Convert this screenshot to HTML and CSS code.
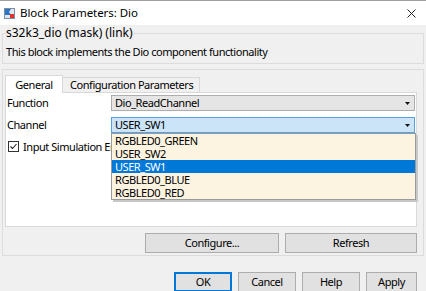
FILE: index.html
```html
<!DOCTYPE html>
<html>
<head>
<meta charset="utf-8">
<link rel="stylesheet" href="styles.css">
</head>
<body>
<div class="window">
  <div class="titlebar">
    <svg class="app-icon" width="11" height="11" viewBox="0 0 11 11">
      <rect x="0.5" y="0.5" width="10" height="10" fill="#dfe8f2" stroke="#7d8fa6"/>
      <path d="M1 1 H7 L5 4 L7 7 H1 Z" fill="#2f74c0"/>
      <rect x="6" y="6" width="4" height="4" fill="#d9332a"/>
    </svg>
    <span class="title">Block Parameters: Dio</span>
    <svg class="close" width="9" height="9" viewBox="0 0 9 9">
      <path d="M0.5 0.5 L8.5 8.5 M8.5 0.5 L0.5 8.5" stroke="#222" stroke-width="1"/>
    </svg>
  </div>

  <fieldset class="desc">
    <legend>s32k3_dio (mask) (link)</legend>
    <p class="desc-text">This block implements the Dio component functionality</p>
  </fieldset>

  <div class="params">
    <div class="tabs">
      <div class="tab active">General</div>
      <div class="tab">Configuration Parameters</div>
    </div>
    <div class="tabpanel">
      <div class="row">
        <span class="label">Function</span>
        <div class="combo">
          <span class="combo-text">Dio_ReadChannel</span>
          <svg class="arrow" width="5" height="3" viewBox="0 0 5 3"><path d="M0 0 H5 L2.5 3 Z" fill="#111"/></svg>
        </div>
      </div>
      <div class="row">
        <span class="label">Channel</span>
        <div class="combo focus">
          <span class="combo-text">USER_SW1</span>
          <svg class="arrow" width="5" height="3" viewBox="0 0 5 3"><path d="M0 0 H5 L2.5 3 Z" fill="#111"/></svg>
          <ul class="listbox">
            <li>RGBLED0_GREEN</li>
            <li>USER_SW2</li>
            <li class="selected">USER_SW1</li>
            <li>RGBLED0_BLUE</li>
            <li>RGBLED0_RED</li>
          </ul>
        </div>
      </div>
      <div class="row check-row">
        <span class="checkbox">
          <svg width="11" height="11" viewBox="0 0 11 11">
            <rect x="0.5" y="0.5" width="10" height="10" fill="#fff" stroke="#333"/>
            <path d="M2.5 5.5 L4.5 7.5 L8.5 3" fill="none" stroke="#222" stroke-width="1.1"/>
          </svg>
        </span>
        <span class="check-label">Input Simulation En</span>
      </div>
    </div>
    <div class="actions">
      <button class="btn configure">Configure...</button>
      <button class="btn refresh">Refresh</button>
    </div>
  </div>

  <div class="footer">
    <button class="btn dlg default">OK</button>
    <button class="btn dlg">Cancel</button>
    <button class="btn dlg">Help</button>
    <button class="btn dlg apply">Apply</button>
  </div>
</div>
</body>
</html>
```

FILE: styles.css
```css
* { box-sizing: border-box; }
html, body { margin: 0; padding: 0; }
body {
  width: 426px;
  height: 291px;
  overflow: hidden;
  background: #f0f0f0;
  font-family: "Noto Sans", "Open Sans", sans-serif;
  font-size: 11px;
  letter-spacing: -0.45px;
  color: #000;
}
.window { width: 426px; height: 291px; overflow: hidden; }

.titlebar {
  height: 25px;
  background: #fff;
  border-top: 1px solid #a0a0a0;
  display: flex;
  align-items: center;
  padding-left: 4px;
  padding-right: 10px;
}
.app-icon { flex: none; }
.title {
  margin-left: 5px;
  flex: 1;
  line-height: 16px;
  font-size: 11.5px;
  letter-spacing: -0.05px;
}
.close { flex: none; }

.desc {
  margin: 0 2px;
  padding: 3px 2px 3px 2px;
  border: 1px solid #dcdcdc;
  min-inline-size: 0;
}
.desc legend {
  padding: 0;
  margin-left: 1px;
  line-height: 16px;
  font-size: 12px;
  letter-spacing: 0;
}
.desc-text { margin: 0 0 0 1px; line-height: 16px; }

.params {
  margin: 5px 2px 0 2px;
  border: 1px solid #dcdcdc;
  padding: 5px 6px 2px 2px;
}
.tabs {
  display: flex;
  height: 17px;
  align-items: flex-end;
  position: relative;
  z-index: 1;
}
.tab {
  height: 15px;
  border: 1px solid #d9d9d9;
  border-bottom: none;
  background: #f0f0f0;
  line-height: 14px;
  padding: 0 0 0 7px;
  margin-left: -1px;
  width: 138px;
  white-space: nowrap;
}
.tab.active {
  margin-left: 0;
  height: 18px;
  margin-bottom: -1px;
  background: #fff;
  width: 58px;
  text-align: center;
  padding: 0;
  line-height: 18px;
  position: relative;
  z-index: 2;
}
.tabpanel {
  height: 135px;
  background: #fff;
  border: 1px solid #d9d9d9;
  padding: 2px 1px 0 1px;
  display: flex;
  flex-direction: column;
  gap: 6px;
}
.row { display: flex; align-items: center; height: 16px; }
.label { width: 104px; flex: none; line-height: 16px; }
.combo {
  position: relative;
  width: 304px;
  height: 16px;
  border: 1px solid #adadad;
  background: #e5e5e5;
  display: flex;
  align-items: center;
  padding-left: 3px;
}
.combo.focus { background: #cce4f7; border-color: #5a9fe0; }
.combo-text { flex: 1; line-height: 14px; }
.arrow { flex: none; margin-right: 4px; }
.listbox {
  position: absolute;
  left: -1px;
  top: 15px;
  width: 305px;
  margin: 0;
  padding: 0;
  list-style: none;
  background: #fdf3e1;
  border: 1px solid #9a9a9a;
  box-shadow: 2px 2px 0 #c8c8c8;
  z-index: 5;
}
.listbox li {
  height: 13px;
  line-height: 13px;
  padding-left: 3px;
}
.listbox li.selected { background: #0078d7; color: #fff; }

.check-row { margin-top: -1px; padding-left: 1px; }
.checkbox { display: flex; width: 11px; height: 11px; }
.check-label {
  margin-left: 4px;
  white-space: nowrap;
  line-height: 13px;
}

.actions {
  display: flex;
  justify-content: flex-end;
  gap: 6px;
  margin-top: 6px;
}
.btn {
  font-family: inherit;
  font-size: 11px;
  letter-spacing: -0.45px;
  color: #000;
  background: #e1e1e1;
  border: 1px solid #adadad;
  height: 20px;
  padding: 0;
  line-height: 16px;
  margin: 0;
}
.configure { width: 134px; }
.refresh { width: 132px; }

.footer {
  display: flex;
  justify-content: flex-end;
  gap: 6px;
  padding-right: 9px;
  margin-top: 16px;
}
.dlg { width: 58px; }
.dlg.apply { width: 51px; }
.default { border-color: #0078d7; box-shadow: inset 0 0 0 1px #0078d7; }
```
